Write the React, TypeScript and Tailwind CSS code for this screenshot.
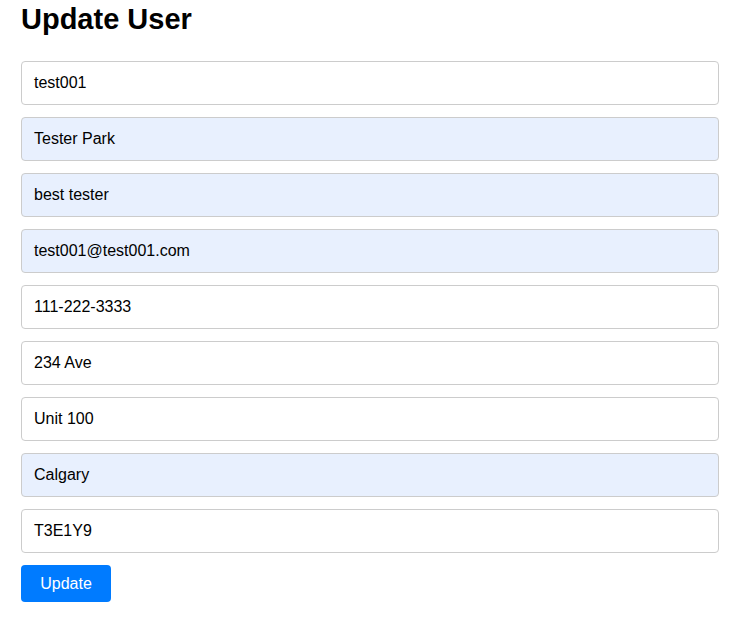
import React from "react";

const fields: { v: string; auto: boolean }[] = [
  { v: "test001", auto: false },
  { v: "Tester Park", auto: true },
  { v: "best tester", auto: true },
  { v: "test001@test001.com", auto: true },
  { v: "111-222-3333", auto: false },
  { v: "234 Ave", auto: false },
  { v: "Unit 100", auto: false },
  { v: "Calgary", auto: true },
  { v: "T3E1Y9", auto: false },
];

export default function App() {
  return (
    <div className="min-h-[620px] bg-white pl-[21px] pr-[20px] pt-[3px]" style={{ fontFamily: '"Liberation Sans", Arial, sans-serif' }}>
      <h1 className="text-[29px] leading-[32px] font-bold text-black mb-[26px]">Update User</h1>
      <div className="flex flex-col gap-[12px]">
        {fields.map((f, i) => (
          <div
            key={i}
            className={`h-[44px] w-[698px] rounded-[4px] border border-[#cccccc] px-[12px] flex items-center text-[16px] text-black ${f.auto ? "bg-[#e8f0fe]" : "bg-white"}`}
          >
            {f.v}
          </div>
        ))}
        <div>
          <button className="h-[37px] w-[90px] rounded-[4px] bg-[#007bff] text-[16px] text-white">Update</button>
        </div>
      </div>
    </div>
  );
}
